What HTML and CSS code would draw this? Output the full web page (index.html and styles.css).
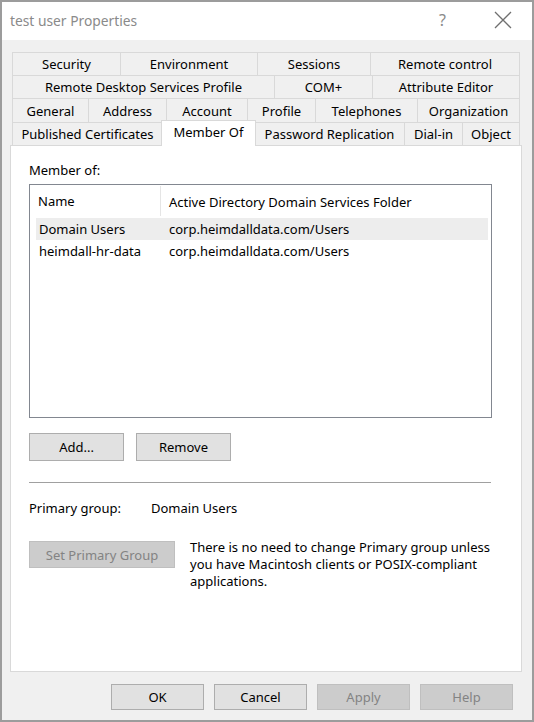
FILE: index.html
```html
<!DOCTYPE html>
<html>
<head>
<meta charset="utf-8">
<link rel="stylesheet" href="styles.css">
</head>
<body>
<div class="window">
  <div class="titlebar">
    <span class="title">test user Properties</span>
    <span class="help-q">?</span>
    <svg class="close-x" width="18" height="18" viewBox="0 0 18 18"><path d="M1 1 L17 17 M17 1 L1 17" stroke="#6f6f6f" stroke-width="1.3" fill="none"/></svg>
  </div>
  <div class="client">
    <div class="tabs">
      <div class="tab-row r1">
        <div class="tab">Security</div>
        <div class="tab">Environment</div>
        <div class="tab">Sessions</div>
        <div class="tab">Remote control</div>
      </div>
      <div class="tab-row r2">
        <div class="tab">Remote Desktop Services Profile</div>
        <div class="tab">COM+</div>
        <div class="tab">Attribute Editor</div>
      </div>
      <div class="tab-row r3">
        <div class="tab">General</div>
        <div class="tab">Address</div>
        <div class="tab">Account</div>
        <div class="tab">Profile</div>
        <div class="tab">Telephones</div>
        <div class="tab">Organization</div>
      </div>
      <div class="tab-row r4">
        <div class="tab">Published Certificates</div>
        <div class="tab active">Member Of</div>
        <div class="tab">Password Replication</div>
        <div class="tab">Dial-in</div>
        <div class="tab">Object</div>
      </div>
    </div>
    <div class="panel">
      <div class="label">Member of:</div>
      <div class="listbox">
        <div class="list-header">
          <div class="hcell first">Name</div>
          <div class="hcell">Active Directory Domain Services Folder</div>
        </div>
        <div class="list-row selected">
          <div>Domain Users</div>
          <div>corp.heimdalldata.com/Users</div>
        </div>
        <div class="list-row">
          <div>heimdall-hr-data</div>
          <div>corp.heimdalldata.com/Users</div>
        </div>
      </div>
      <div class="btn-row">
        <button class="btn small">Add...</button>
        <button class="btn small">Remove</button>
      </div>
      <div class="separator"></div>
      <div class="primary-row">
        <span class="primary-label">Primary group:</span>
        <span>Domain Users</span>
      </div>
      <div class="set-row">
        <button class="btn disabled set-btn">Set Primary Group</button>
        <p class="note">There is no need to change Primary group unless you have Macintosh clients or POSIX-compliant applications.</p>
      </div>
    </div>
    <div class="dialog-buttons">
      <button class="btn dlg">OK</button>
      <button class="btn dlg">Cancel</button>
      <button class="btn dlg disabled">Apply</button>
      <button class="btn dlg disabled">Help</button>
    </div>
  </div>
</div>
</body>
</html>
```

FILE: styles.css
```css
html, body {
  margin: 0;
  padding: 0;
  background: #ffffff;
}

.window {
  width: 534px;
  height: 722px;
  box-sizing: border-box;
  border: 2px solid #9c9c9c;
  display: flex;
  flex-direction: column;
  font-family: "Noto Sans", "Open Sans", sans-serif;
  font-size: 13px;
  color: #000;
}

.titlebar {
  height: 38px;
  flex: none;
  background: #ffffff;
  display: flex;
  align-items: center;
  padding-left: 8px;
}

.title {
  font-size: 13.8px;
  color: #8a8a8a;
  flex: 1;
  margin-top: -1px;
}

.help-q {
  font-size: 16px;
  color: #8a8a8a;
  margin-right: 48px;
  margin-top: -2px;
}

.close-x {
  margin-right: 20px;
  margin-top: -2px;
}

.client {
  flex: 1;
  background: #f0f0f0;
  padding: 12px 10px 0 8px;
  display: flex;
  flex-direction: column;
}

.tabs {
  margin-left: 2px;
  width: 507px;
}

.tab-row {
  display: grid;
  border-left: 1px solid #d9d9d9;
  height: 23px;
}

.tab-row.r3 {
  height: 24px;
}

.r1 { grid-template-columns: 108px 137px 113px 149px; }
.r2 { grid-template-columns: 262px 98px 147px; }
.r3 { grid-template-columns: 76px 78px 81px 68px 102px 102px; }
.r4 { grid-template-columns: 150px 92px 150px 58px 57px; }

.tab {
  box-sizing: border-box;
  border-top: 1px solid #d9d9d9;
  border-right: 1px solid #d9d9d9;
  display: flex;
  align-items: center;
  justify-content: center;
  white-space: nowrap;
  background: #f0f0f0;
}

.tab.active {
  position: relative;
  z-index: 1;
  background: #ffffff;
  margin: -2px -1px -1px -2px;
  border-left: 1px solid #d9d9d9;
  padding-bottom: 4px;
}

.panel {
  width: 512px;
  height: 527px;
  box-sizing: border-box;
  background: #ffffff;
  border: 1px solid #d9d9d9;
  padding: 15px 0 0 18px;
  display: flex;
  flex-direction: column;
}

.label {
  line-height: 18px;
}

.listbox {
  margin-top: 5px;
  width: 463px;
  height: 234px;
  box-sizing: border-box;
  border: 1px solid #828790;
  background: #fff;
}

.list-header {
  display: grid;
  grid-template-columns: 131px 1fr;
  height: 33px;
  width: 459px;
  box-sizing: border-box;
}

.hcell {
  display: flex;
  align-items: center;
  padding-left: 8px;
}

.hcell.first {
  padding-left: 8px;
  border-right: 1px solid #e5e5e5;
  margin: 1px 0 2px 0;
}

.list-row {
  display: grid;
  grid-template-columns: 130px 1fr;
  margin-left: 6px;
  width: 452px;
  height: 22px;
  box-sizing: border-box;
  padding-left: 3px;
  align-items: center;
  white-space: nowrap;
}

.list-row.selected {
  background: #ededed;
}

.btn-row {
  display: flex;
  gap: 12px;
  margin-top: 15px;
}

.btn {
  font-family: inherit;
  font-size: 13px;
  color: #000;
  background: #e1e1e1;
  border: 1px solid #adadad;
  border-radius: 0;
  padding: 0;
  margin: 0;
  box-sizing: border-box;
}

.btn.small {
  width: 95px;
  height: 28px;
}

.btn.disabled {
  background: #cccccc;
  border-color: #bfbfbf;
  color: #838383;
}

.separator {
  margin-top: 21px;
  width: 462px;
  height: 1px;
  background: #a0a0a0;
  border-bottom: 1px solid #ffffff;
}

.primary-row {
  margin-top: 15px;
  line-height: 18px;
  display: flex;
}

.primary-label {
  width: 122px;
}

.set-row {
  margin-top: 24px;
  display: flex;
  align-items: flex-start;
  gap: 15px;
}

.set-btn {
  width: 146px;
  height: 27px;
  flex: none;
}

.note {
  margin: -2px 0 0 0;
  width: 302px;
  line-height: 17px;
}

.dialog-buttons {
  display: flex;
  justify-content: flex-end;
  gap: 10px;
  margin-top: 12px;
  padding-right: 9px;
}

.btn.dlg {
  width: 93px;
  height: 26px;
}
```
